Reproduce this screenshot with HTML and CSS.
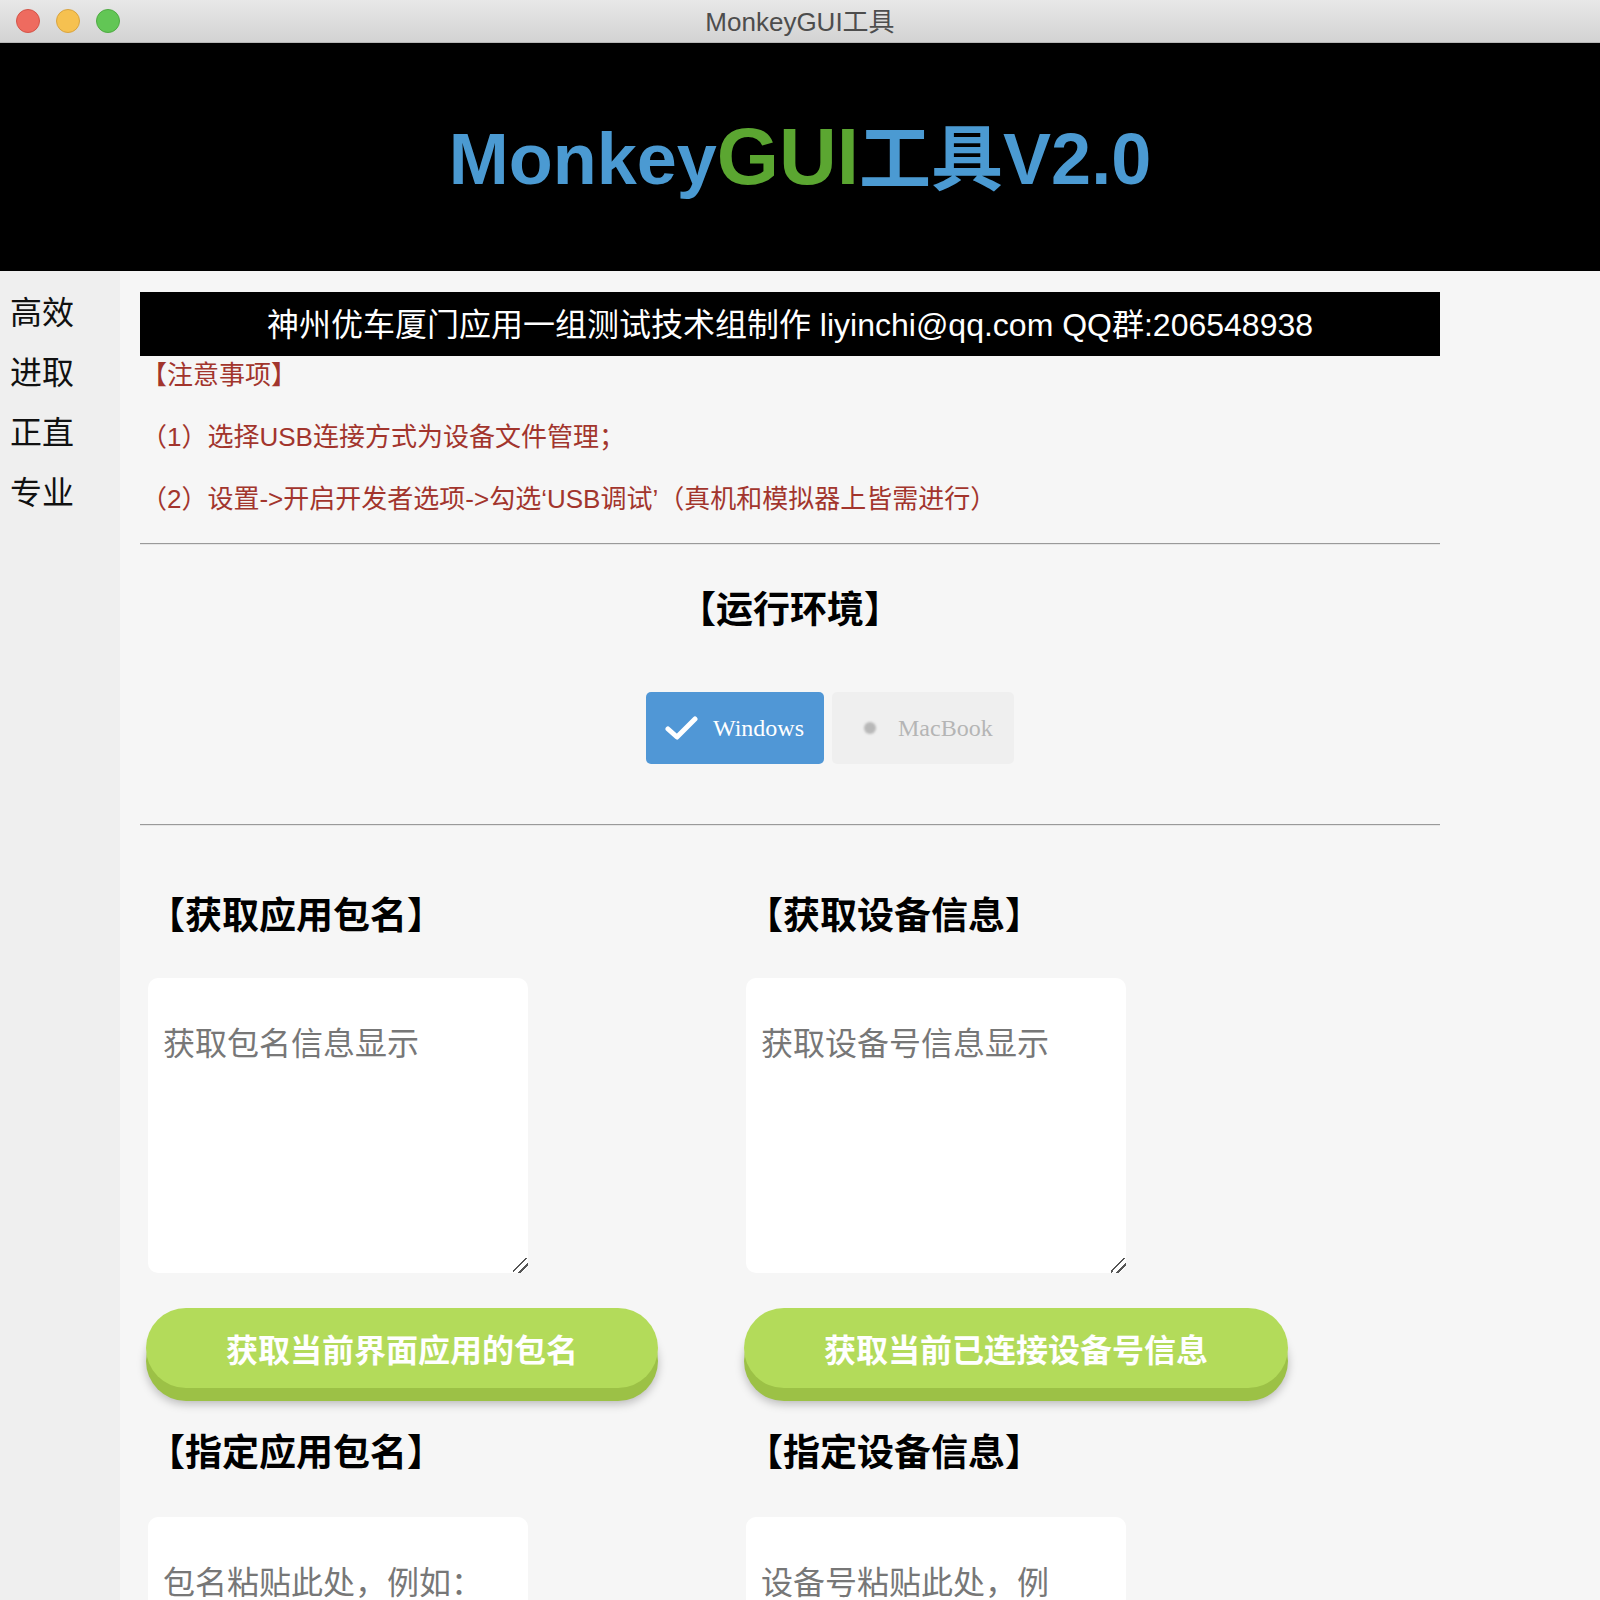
FILE: index.html
```html
<!DOCTYPE html>
<html lang="zh-CN">
<head>
<meta charset="utf-8">
<title>MonkeyGUI工具</title>
<link rel="stylesheet" href="styles.css">
</head>
<body>
<div class="window">
  <div class="titlebar">
    <div class="lights">
      <span class="light red"></span>
      <span class="light yellow"></span>
      <span class="light green"></span>
    </div>
    <div class="wtitle">MonkeyGUI工具</div>
    <div></div>
  </div>
  <header class="hero">
    <h1 class="logo"><span class="blue">Monkey</span><span class="green-t">GUI</span><span class="blue">工具V2.0</span></h1>
  </header>
  <div class="page">
    <nav class="side">
      <div class="side-item">高效</div>
      <div class="side-item">进取</div>
      <div class="side-item">正直</div>
      <div class="side-item">专业</div>
    </nav>
    <main class="main">
      <div class="banner">神州优车厦门应用一组测试技术组制作 liyinchi@qq.com QQ群:206548938</div>
      <div class="notes">
        <p class="note">【注意事项】</p>
        <p class="note">（1）选择USB连接方式为设备文件管理；</p>
        <p class="note">（2）设置-&gt;开启开发者选项-&gt;勾选‘USB调试’（真机和模拟器上皆需进行）</p>
      </div>
      <hr class="rule rule-1">
      <h2 class="env-title">【运行环境】</h2>
      <div class="env">
        <button class="seg seg-on" type="button">
          <svg class="check" width="34" height="28" viewBox="0 0 34 28"><path d="M3 15 L12 23 L30 5" fill="none" stroke="#fff" stroke-width="5" stroke-linecap="round" stroke-linejoin="round"/></svg>
          <span>Windows</span>
        </button>
        <button class="seg seg-off" type="button">
          <span class="dot"></span>
          <span>MacBook</span>
        </button>
      </div>
      <hr class="rule rule-2">
      <div class="cols">
        <section class="col">
          <h2 class="sec-title">【获取应用包名】</h2>
          <textarea class="box" placeholder="获取包名信息显示"></textarea>
          <button class="pill" type="button">获取当前界面应用的包名</button>
          <h2 class="sec-title sec-title-2">【指定应用包名】</h2>
          <textarea class="box box-2" placeholder="包名粘贴此处，例如：com.ucarinc.driver"></textarea>
        </section>
        <section class="col">
          <h2 class="sec-title">【获取设备信息】</h2>
          <textarea class="box" placeholder="获取设备号信息显示"></textarea>
          <button class="pill" type="button">获取当前已连接设备号信息</button>
          <h2 class="sec-title sec-title-2">【指定设备信息】</h2>
          <textarea class="box box-2" placeholder="设备号粘贴此处，例如：emulator-5554"></textarea>
        </section>
      </div>
    </main>
  </div>
</div>
</body>
</html>
```

FILE: styles.css
```css
html, body {
  margin: 0;
  padding: 0;
  height: 1600px;
  overflow: hidden;
  background: #f6f6f6;
}

body {
  font-family: "Liberation Sans", "Noto Sans CJK SC", sans-serif;
}

.window {
  width: 1600px;
  height: 1600px;
  overflow: hidden;
  background: #f6f6f6;
}

.titlebar {
  height: 43px;
  box-sizing: border-box;
  background: linear-gradient(#e8e8e8, #d3d3d3);
  border-bottom: 1px solid #b8b8b8;
  display: grid;
  grid-template-columns: 1fr auto 1fr;
  align-items: center;
}

.lights {
  display: flex;
  gap: 16px;
  padding-left: 16px;
}

.light {
  width: 24px;
  height: 24px;
  border-radius: 50%;
  box-sizing: border-box;
}

.red { background: #ee6b5f; border: 1px solid #d45448; }
.yellow { background: #f6c150; border: 1px solid #d9a440; }
.green { background: #62c655; border: 1px solid #4fab43; }

.wtitle {
  font-size: 26px;
  color: #4d4d4d;
  font-family: "Liberation Sans", "Noto Sans CJK SC", sans-serif;
  line-height: 30px;
  padding-top: 1px;
}

.hero {
  height: 228px;
  background: #000;
  display: flex;
  align-items: center;
  justify-content: center;
}

.logo {
  margin: 0;
  padding-top: 2px;
  font-family: "Liberation Sans", "Noto Sans CJK SC", sans-serif;
  font-weight: bold;
  font-size: 72px;
  line-height: 90px;
  white-space: nowrap;
}

.blue { color: #4b9ad2; }
.green-t { color: #5ba631; font-size: 80px; }

.page {
  display: flex;
  height: 1329px;
}

.side {
  width: 120px;
  flex: none;
  background: #efefef;
  padding-top: 18px;
  display: flex;
  flex-direction: column;
  gap: 18px;
}

.side-item {
  font-size: 32px;
  line-height: 42px;
  padding-left: 10px;
  color: #111;
  font-family: "Noto Sans CJK SC", sans-serif;
}

.main {
  width: 1300px;
  padding-left: 20px;
  padding-top: 21px;
}

.banner {
  height: 64px;
  box-sizing: border-box;
  padding-bottom: 4px;
  background: #000;
  color: #fff;
  font-size: 32px;
  display: flex;
  align-items: center;
  justify-content: center;
  white-space: nowrap;
}

.notes {
  display: flex;
  flex-direction: column;
  gap: 26px;
  padding-top: 1px;
}

.note {
  margin: 0;
  font-family: "Liberation Sans", "Noto Sans CJK SC", sans-serif;
  font-size: 26px;
  line-height: 36px;
  color: #a2352d;
  padding-left: 1px;
  text-spacing-trim: space-all;
}

.rule {
  margin: 0;
  height: 0;
  border: none;
  border-top: 1px solid #9a9a9a;
  border-bottom: 1px solid #e6e6e6;
}

.rule-1 { margin-top: 26px; }
.rule-2 { margin-top: 60px; }

.env-title {
  margin: 37px 0 0;
  text-align: center;
  font-family: "Noto Sans CJK SC", sans-serif;
  font-weight: bold;
  font-size: 37px;
  line-height: 50px;
  color: #000;
}

.env {
  display: flex;
  gap: 8px;
  margin-top: 60px;
  padding-left: 506px;
}

.seg {
  height: 72px;
  border: none;
  border-radius: 5px;
  display: flex;
  align-items: center;
  font-family: "Liberation Serif", serif;
  font-size: 24px;
  padding: 0;
  box-sizing: border-box;
}

.seg-on {
  width: 178px;
  background: #5097d6;
  color: #fff;
  padding-left: 19px;
  gap: 14px;
}

.seg-off {
  width: 182px;
  background: #efefef;
  color: #b5b5b5;
  padding-left: 32px;
  gap: 22px;
}

.check { display: block; filter: blur(0.4px); }

.dot {
  width: 12px;
  height: 12px;
  border-radius: 50%;
  background: #b8b8b8;
  filter: blur(0.8px);
}

.cols {
  display: grid;
  grid-template-columns: 598px 598px;
  padding-left: 8px;
}

.col {
  display: flex;
  flex-direction: column;
  align-items: flex-start;
}

.sec-title {
  margin: 62px 0 0;
  font-family: "Noto Sans CJK SC", sans-serif;
  font-weight: bold;
  font-size: 37px;
  line-height: 50px;
  color: #000;
}

.sec-title-2 { margin-top: 37px; }

.box {
  margin-top: 40px;
  width: 380px;
  height: 295px;
  box-sizing: border-box;
  border: none;
  outline: none;
  border-radius: 10px;
  background: #fff;
  padding: 40px 15px;
  font-family: "Noto Sans CJK SC", sans-serif;
  font-size: 32px;
  line-height: 46px;
  color: #333;
}

.box::placeholder { color: #777; }

.box::-webkit-resizer {
  background:
    linear-gradient(135deg,
      transparent 0, transparent 42%,
      #555 42%, #555 50%,
      transparent 50%, transparent 66%,
      #555 66%, #555 74%,
      transparent 74%);
}

.box-2 { margin-top: 42px; }

.pill {
  margin-top: 35px;
  margin-left: -2px;
  height: 80px;
  padding: 0 80px;
  border: none;
  border-radius: 40px;
  background: #b3db5a;
  color: #fff;
  font-family: "Noto Sans CJK SC", sans-serif;
  font-weight: bold;
  font-size: 32px;
  box-shadow: 0 13px 0 #9cc146, 0 16px 10px rgba(0, 0, 0, 0.25);
}
```
